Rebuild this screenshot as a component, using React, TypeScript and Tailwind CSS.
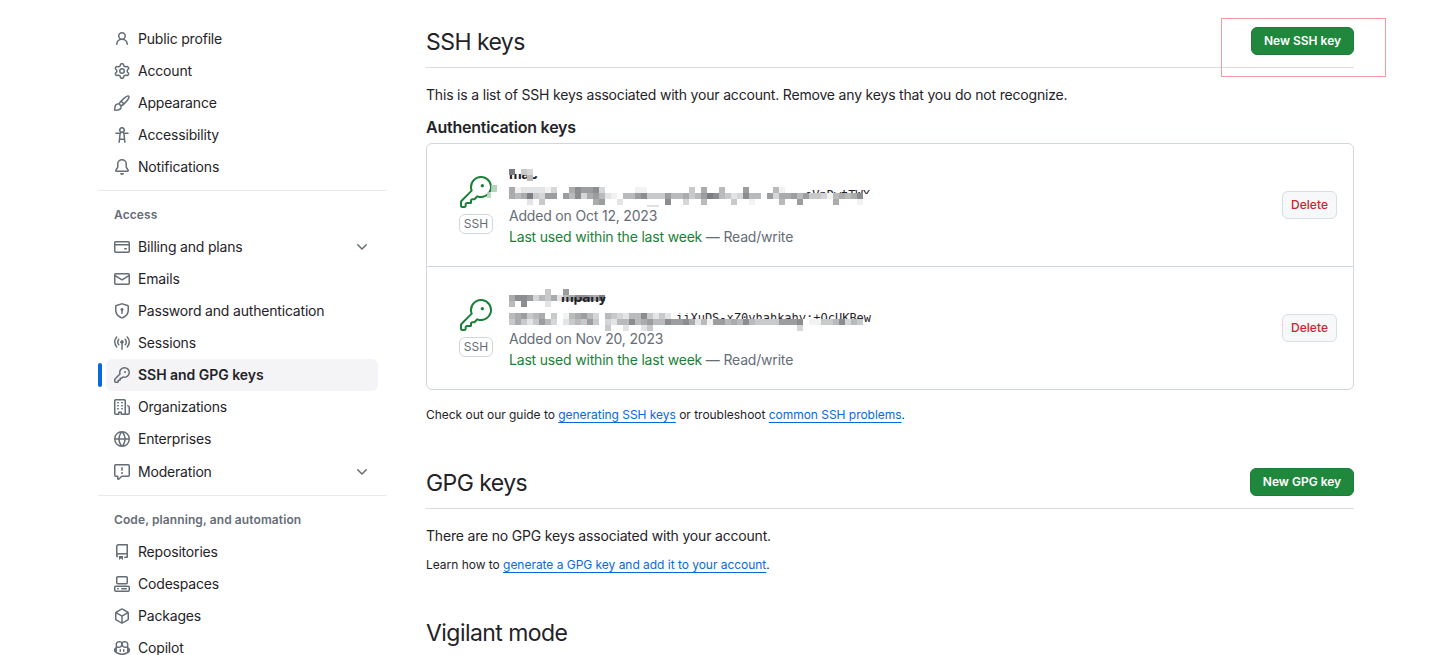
import type { ReactNode } from "react";
import { GoKey } from "react-icons/go";

const icons: Record<string, string> = {
  person:
    "M10.561 8.073a6.005 6.005 0 0 1 3.432 5.142.75.75 0 1 1-1.498.07 4.5 4.5 0 0 0-8.99 0 .75.75 0 0 1-1.498-.07 6.004 6.004 0 0 1 3.431-5.142 3.999 3.999 0 1 1 5.123 0ZM10.5 5a2.5 2.5 0 1 0-5 0 2.5 2.5 0 0 0 5 0Z",
  gear:
    "M8 0a8.2 8.2 0 0 1 .701.031C9.444.095 9.99.645 10.16 1.29l.288 1.107c.018.066.079.158.212.224.231.114.454.243.668.386.123.082.233.09.299.071l1.103-.303c.644-.176 1.392.021 1.82.63.27.385.506.792.704 1.218.315.675.111 1.422-.364 1.891l-.814.806c-.049.048-.098.147-.088.294.016.257.016.515 0 .772-.01.147.038.246.088.294l.814.806c.475.469.679 1.216.364 1.891a7.977 7.977 0 0 1-.704 1.217c-.428.61-1.176.807-1.82.63l-1.102-.302c-.067-.019-.177-.011-.3.071a5.909 5.909 0 0 1-.668.386c-.133.066-.194.158-.211.224l-.29 1.106c-.168.646-.715 1.196-1.458 1.26a8.006 8.006 0 0 1-1.402 0c-.743-.064-1.289-.614-1.458-1.26l-.289-1.106c-.018-.066-.079-.158-.212-.224a5.738 5.738 0 0 1-.668-.386c-.123-.082-.233-.09-.299-.071l-1.103.303c-.644.176-1.392-.021-1.82-.63a8.12 8.12 0 0 1-.704-1.218c-.315-.675-.111-1.422.363-1.891l.815-.806c.05-.048.098-.147.088-.294a6.214 6.214 0 0 1 0-.772c.01-.147-.038-.246-.088-.294l-.815-.806C.635 6.045.431 5.298.746 4.623a7.92 7.92 0 0 1 .704-1.217c.428-.61 1.176-.807 1.82-.63l1.102.302c.067.019.177.011.3-.071.214-.143.437-.272.668-.386.133-.066.194-.158.211-.224l.29-1.106C6.009.645 6.556.095 7.299.03 7.53.01 7.764 0 8 0Zm-.571 1.525c-.036.003-.108.036-.137.146l-.289 1.105c-.147.561-.549.967-.998 1.189-.173.086-.34.183-.5.29-.417.278-.97.423-1.529.27l-1.103-.303c-.109-.03-.175.016-.195.045-.22.312-.412.644-.573.99-.014.031-.021.11.059.19l.815.806c.411.406.562.957.53 1.456a4.709 4.709 0 0 0 0 .582c.032.499-.119 1.05-.53 1.456l-.815.806c-.081.08-.073.159-.059.19.162.346.353.677.573.989.02.03.085.076.195.046l1.102-.303c.56-.153 1.113-.008 1.53.27.161.107.328.204.501.29.447.222.85.629.997 1.189l.289 1.105c.029.109.101.143.137.146a6.6 6.6 0 0 0 1.142 0c.036-.003.108-.036.137-.146l.289-1.105c.147-.561.549-.967.998-1.189.173-.086.34-.183.5-.29.417-.278.97-.423 1.529-.27l1.103.303c.109.029.175-.016.195-.045.22-.313.411-.644.573-.99.014-.031.021-.11-.059-.19l-.815-.806c-.411-.406-.562-.957-.53-1.456a4.709 4.709 0 0 0 0-.582c-.032-.499.119-1.05.53-1.456l.815-.806c.081-.08.073-.159.059-.19a6.464 6.464 0 0 0-.573-.989c-.02-.03-.085-.076-.195-.046l-1.102.303c-.56.153-1.113.008-1.53-.27a4.44 4.44 0 0 0-.501-.29c-.447-.222-.85-.629-.997-1.189l-.289-1.105c-.029-.11-.101-.143-.137-.146a6.6 6.6 0 0 0-1.142 0ZM11 8a3 3 0 1 1-6 0 3 3 0 0 1 6 0ZM9.5 8a1.5 1.5 0 1 0-3.001.001A1.5 1.5 0 0 0 9.5 8Z",
  paintbrush:
    "M11.134 1.535c.7-.509 1.416-.942 2.076-1.155.649-.21 1.463-.267 2.069.34.603.601.568 1.411.368 2.07-.202.668-.624 1.39-1.125 2.096-1.011 1.424-2.496 2.987-3.775 4.249-1.098 1.084-2.132 1.839-3.04 2.3a3.744 3.744 0 0 1-1.055 3.217c-.431.431-1.065.691-1.657.861-.614.177-1.294.287-1.914.357A21.151 21.151 0 0 1 .797 16H.743l.007-.75H.749L.742 16a.75.75 0 0 1-.743-.742l.743-.008-.742.007v-.054a21.25 21.25 0 0 1 .13-2.284c.067-.647.187-1.287.358-1.914.17-.591.43-1.226.86-1.657a3.746 3.746 0 0 1 3.227-1.054c.466-.893 1.225-1.907 2.314-2.982 1.271-1.255 2.833-2.75 4.245-3.777ZM1.62 13.089c-.051.464-.086.929-.104 1.395.466-.018.932-.053 1.396-.104a10.511 10.511 0 0 0 1.668-.309c.526-.151.856-.325 1.011-.48a2.25 2.25 0 1 0-3.182-3.182c-.155.155-.329.485-.48 1.01a10.515 10.515 0 0 0-.309 1.67Zm10.396-10.34c-1.224.89-2.605 2.189-3.822 3.384l1.718 1.718c1.21-1.205 2.51-2.597 3.387-3.833.47-.662.78-1.227.912-1.662.134-.444.032-.551.009-.575h-.001V1.78c-.014-.014-.113-.113-.548.027-.432.14-.995.462-1.655.942Zm-4.832 7.266-.001.001a9.859 9.859 0 0 0 1.63-1.142L7.155 7.216a9.7 9.7 0 0 0-1.161 1.607c.482.302.889.71 1.19 1.192Z",
  accessibility:
    "M9.923 5.302c.063.063.122.129.178.198H14A.75.75 0 0 1 14 7h-3.3l.578 5.163.362 2.997a.75.75 0 0 1-1.49.18L9.868 13H6.132l-.282 2.34a.75.75 0 0 1-1.49-.18l.362-2.997L5.3 7H2a.75.75 0 0 1 0-1.5h3.9a2.54 2.54 0 0 1 .176-.198 3 3 0 1 1 3.847 0ZM9.2 7.073h-.001a1.206 1.206 0 0 0-2.398 0L6.305 11.5h3.39ZM9.5 3a1.5 1.5 0 1 0-3.001.001A1.5 1.5 0 0 0 9.5 3Z",
  bell:
    "M8 16a2 2 0 0 0 1.985-1.75c.017-.137-.097-.25-.235-.25h-3.5c-.138 0-.252.113-.235.25A2 2 0 0 0 8 16ZM3 5a5 5 0 0 1 10 0v2.947c0 .05.015.098.042.139l1.703 2.555A1.519 1.519 0 0 1 13.482 13H2.518a1.516 1.516 0 0 1-1.263-2.36l1.703-2.554A.255.255 0 0 0 3 7.947Zm5-3.5A3.5 3.5 0 0 0 4.5 5v2.947c0 .346-.102.683-.294.97l-1.703 2.556a.017.017 0 0 0-.003.01l.001.006c0 .002.002.004.004.006l.006.004.007.001h10.964l.007-.001.006-.004.004-.006.001-.007a.017.017 0 0 0-.003-.01l-1.703-2.554a1.745 1.745 0 0 1-.294-.97V5A3.5 3.5 0 0 0 8 1.5Z",
  creditCard:
    "M10.75 9a.75.75 0 0 0 0 1.5h1.5a.75.75 0 0 0 0-1.5h-1.5ZM0 3.75C0 2.784.784 2 1.75 2h12.5c.966 0 1.75.784 1.75 1.75v8.5A1.75 1.75 0 0 1 14.25 14H1.75A1.75 1.75 0 0 1 0 12.25ZM14.5 6.5h-13v5.75c0 .138.112.25.25.25h12.5a.25.25 0 0 0 .25-.25Zm0-2.75a.25.25 0 0 0-.25-.25H1.75a.25.25 0 0 0-.25.25V5h13Z",
  mail:
    "M1.75 2h12.5c.966 0 1.75.784 1.75 1.75v8.5A1.75 1.75 0 0 1 14.25 14H1.75A1.75 1.75 0 0 1 0 12.25v-8.5C0 2.784.784 2 1.75 2ZM1.5 12.251c0 .138.112.25.25.25h12.5a.25.25 0 0 0 .25-.25V5.809L8.38 9.397a.75.75 0 0 1-.76 0L1.5 5.809v6.442Zm13-8.181v-.32a.25.25 0 0 0-.25-.25H1.75a.25.25 0 0 0-.25.25v.32L8 7.88Z",
  shieldLock:
    "m8.533.133 5.25 1.68A1.75 1.75 0 0 1 15 3.48V7c0 1.566-.32 3.182-1.303 4.682-.983 1.498-2.585 2.813-5.032 3.855a1.697 1.697 0 0 1-1.33 0c-2.447-1.042-4.049-2.357-5.032-3.855C1.32 10.182 1 8.566 1 7V3.48a1.755 1.755 0 0 1 1.217-1.667l5.25-1.68a1.748 1.748 0 0 1 1.066 0Zm-.61 1.429.001.001-5.25 1.68a.251.251 0 0 0-.174.237V7c0 1.36.275 2.666 1.057 3.859.784 1.194 2.121 2.342 4.366 3.298a.196.196 0 0 0 .154 0c2.245-.957 3.582-2.103 4.366-3.297C13.225 9.666 13.5 8.358 13.5 7V3.48a.25.25 0 0 0-.174-.238l-5.25-1.68a.25.25 0 0 0-.153 0ZM9.5 6.5c0 .536-.286 1.032-.75 1.3v2.45a.75.75 0 0 1-1.5 0V7.8A1.5 1.5 0 1 1 9.5 6.5Z",
  broadcast:
    "M8.75 8.582v5.668a.75.75 0 0 1-1.5 0V8.582a1.75 1.75 0 1 1 1.5 0Zm3.983-7.125a.75.75 0 0 1 1.06.026A7.976 7.976 0 0 1 16 7c0 2.139-.84 4.083-2.207 5.517a.75.75 0 1 1-1.086-1.034A6.474 6.474 0 0 0 14.5 7a6.474 6.474 0 0 0-1.793-4.483.75.75 0 0 1 .026-1.06Zm-9.466 0c.3.286.312.76.026 1.06A6.474 6.474 0 0 0 1.5 7a6.47 6.47 0 0 0 1.793 4.483.75.75 0 0 1-1.086 1.034A7.973 7.973 0 0 1 0 7c0-2.139.84-4.083 2.207-5.517a.75.75 0 0 1 1.06-.026Zm8.556 2.321A4.988 4.988 0 0 1 13 7a4.988 4.988 0 0 1-1.177 3.222.75.75 0 1 1-1.146-.967A3.487 3.487 0 0 0 11.5 7c0-.86-.309-1.645-.823-2.255a.75.75 0 0 1 1.146-.967Zm-6.492.958A3.48 3.48 0 0 0 4.5 7a3.48 3.48 0 0 0 .823 2.255.75.75 0 0 1-1.146.967A4.981 4.981 0 0 1 3 7a4.982 4.982 0 0 1 1.188-3.236.75.75 0 1 1 1.143.972Z",
  key:
    "M10.5 0a5.499 5.499 0 1 1-1.288 10.848l-.932.932a.749.749 0 0 1-.53.22H7v.75a.749.749 0 0 1-.22.53l-.5.5a.749.749 0 0 1-.53.22H5v.75a.749.749 0 0 1-.22.53l-.5.5a.749.749 0 0 1-.53.22h-2A1.75 1.75 0 0 1 0 14.25v-2c0-.199.079-.389.22-.53l4.932-4.932A5.5 5.5 0 0 1 10.5 0Zm-4 5.5c-.001.431.069.86.205 1.269a.75.75 0 0 1-.181.768L1.5 12.56v1.69c0 .138.112.25.25.25h1.69l.06-.06v-1.19a.75.75 0 0 1 .75-.75h1.19l.06-.06v-1.19a.75.75 0 0 1 .75-.75h1.19l1.023-1.025a.75.75 0 0 1 .768-.18A4 4 0 1 0 6.5 5.5ZM11 6a1 1 0 1 1 0-2 1 1 0 0 1 0 2Z",
  organization:
    "M1.75 16A1.75 1.75 0 0 1 0 14.25V1.75C0 .784.784 0 1.75 0h8.5C11.216 0 12 .784 12 1.75v12.5c0 .085-.006.168-.018.25h2.268a.25.25 0 0 0 .25-.25V8.285a.25.25 0 0 0-.111-.208l-1.055-.703a.749.749 0 1 1 .832-1.248l1.055.703c.487.325.779.871.779 1.456v5.965A1.75 1.75 0 0 1 14.25 16h-3.5a.766.766 0 0 1-.197-.026c-.099.017-.2.026-.303.026h-3a.75.75 0 0 1-.75-.75V14h-1v1.25a.75.75 0 0 1-.75.75Zm-.25-1.75c0 .138.112.25.25.25H4v-1.25a.75.75 0 0 1 .75-.75h2.5a.75.75 0 0 1 .75.75v1.25h2.25a.25.25 0 0 0 .25-.25V1.75a.25.25 0 0 0-.25-.25h-8.5a.25.25 0 0 0-.25.25ZM3.75 6h.5a.75.75 0 0 1 0 1.5h-.5a.75.75 0 0 1 0-1.5ZM3 3.75A.75.75 0 0 1 3.75 3h.5a.75.75 0 0 1 0 1.5h-.5A.75.75 0 0 1 3 3.75Zm4 3A.75.75 0 0 1 7.75 6h.5a.75.75 0 0 1 0 1.5h-.5A.75.75 0 0 1 7 6.75ZM7.75 3h.5a.75.75 0 0 1 0 1.5h-.5a.75.75 0 0 1 0-1.5ZM3 9.75A.75.75 0 0 1 3.75 9h.5a.75.75 0 0 1 0 1.5h-.5A.75.75 0 0 1 3 9.75ZM7.75 9h.5a.75.75 0 0 1 0 1.5h-.5a.75.75 0 0 1 0-1.5Z",
  globe:
    "M8 0a8 8 0 1 1 0 16A8 8 0 0 1 8 0ZM5.78 8.75a9.64 9.64 0 0 0 1.363 4.177c.255.426.542.832.857 1.215.245-.296.551-.705.857-1.215A9.64 9.64 0 0 0 10.22 8.75Zm4.44-1.5a9.64 9.64 0 0 0-1.363-4.177c-.307-.51-.612-.919-.857-1.215a9.927 9.927 0 0 0-.857 1.215A9.64 9.64 0 0 0 5.78 7.25Zm-5.944 1.5H1.543a6.507 6.507 0 0 0 4.666 5.5c-.123-.181-.24-.365-.352-.552-.715-1.192-1.437-2.874-1.581-4.948Zm-2.733-1.5h2.733c.144-2.074.866-3.756 1.58-4.948.12-.197.237-.381.353-.552a6.507 6.507 0 0 0-4.666 5.5Zm10.181 1.5c-.144 2.074-.866 3.756-1.58 4.948-.12.197-.237.381-.353.552a6.507 6.507 0 0 0 4.666-5.5Zm2.733-1.5a6.507 6.507 0 0 0-4.666-5.5c.123.181.24.365.353.552.714 1.192 1.436 2.874 1.58 4.948Z",
  report:
    "M0 1.75C0 .784.784 0 1.75 0h12.5C15.216 0 16 .784 16 1.75v9.5A1.75 1.75 0 0 1 14.25 13H8.06l-2.573 2.573A1.458 1.458 0 0 1 3 14.543V13H1.75A1.75 1.75 0 0 1 0 11.25Zm1.75-.25a.25.25 0 0 0-.25.25v9.5c0 .138.112.25.25.25h2a.75.75 0 0 1 .75.75v2.19l2.72-2.72a.749.749 0 0 1 .53-.22h6.5a.25.25 0 0 0 .25-.25v-9.5a.25.25 0 0 0-.25-.25Zm7 2.25v2.5a.75.75 0 0 1-1.5 0v-2.5a.75.75 0 0 1 1.5 0ZM9 9a1 1 0 1 1-2 0 1 1 0 0 1 2 0Z",
  repo:
    "M2 2.5A2.5 2.5 0 0 1 4.5 0h8.75a.75.75 0 0 1 .75.75v12.5a.75.75 0 0 1-.75.75h-2.5a.75.75 0 0 1 0-1.5h1.75v-2h-8a1 1 0 0 0-.714 1.7.75.75 0 1 1-1.072 1.05A2.495 2.495 0 0 1 2 11.5Zm10.5-1h-8a1 1 0 0 0-1 1v6.708A2.486 2.486 0 0 1 4.5 9h8ZM5 12.25a.25.25 0 0 1 .25-.25h3.5a.25.25 0 0 1 .25.25v3.25a.25.25 0 0 1-.4.2l-1.45-1.087a.249.249 0 0 0-.3 0L5.4 15.7a.25.25 0 0 1-.4-.2Z",
  codespaces:
    "M0 11.25c0-.966.784-1.75 1.75-1.75h12.5c.966 0 1.75.784 1.75 1.75v3A1.75 1.75 0 0 1 14.25 16H1.75A1.75 1.75 0 0 1 0 14.25Zm2-9.5C2 .784 2.784 0 3.75 0h8.5C13.216 0 14 .784 14 1.75v5a1.75 1.75 0 0 1-1.75 1.75h-8.5A1.75 1.75 0 0 1 2 6.75Zm1.75-.25a.25.25 0 0 0-.25.25v5c0 .138.112.25.25.25h8.5a.25.25 0 0 0 .25-.25v-5a.25.25 0 0 0-.25-.25Zm-2 9.5a.25.25 0 0 0-.25.25v3c0 .138.112.25.25.25h12.5a.25.25 0 0 0 .25-.25v-3a.25.25 0 0 0-.25-.25ZM7 12.75a.75.75 0 0 1 .75-.75h4.5a.75.75 0 0 1 0 1.5h-4.5a.75.75 0 0 1-.75-.75Zm-4 0a.75.75 0 0 1 .75-.75h.5a.75.75 0 0 1 0 1.5h-.5a.75.75 0 0 1-.75-.75Z",
  package:
    "m8.878.392 5.25 3.045c.54.314.872.89.872 1.514v6.098a1.75 1.75 0 0 1-.872 1.514l-5.25 3.045a1.75 1.75 0 0 1-1.756 0l-5.25-3.045A1.75 1.75 0 0 1 1 11.049V4.951c0-.624.332-1.201.872-1.514L7.122.392a1.75 1.75 0 0 1 1.756 0ZM7.875 1.69l-4.63 2.685L8 7.133l4.755-2.758-4.63-2.685a.248.248 0 0 0-.25 0ZM2.5 5.677v5.372c0 .09.047.171.125.216l4.625 2.683V8.432Zm6.25 8.271 4.625-2.683a.25.25 0 0 0 .125-.216V5.677L8.75 8.432Z",
  copilot:
    "M7.998 15.035c-4.562 0-7.873-2.914-7.998-3.749V9.338c.085-.628.677-1.686 1.588-2.065.013-.07.024-.143.036-.218.029-.183.06-.384.126-.612-.201-.508-.254-1.084-.254-1.656 0-.87.128-1.769.693-2.484.579-.733 1.494-1.124 2.724-1.261 1.206-.134 2.262.034 2.944.765.05.053.096.108.139.165.044-.057.094-.112.143-.165.682-.731 1.738-.899 2.944-.765 1.23.137 2.145.528 2.724 1.261.566.715.693 1.614.693 2.484 0 .572-.053 1.148-.254 1.656.066.228.098.429.126.612.012.076.024.148.037.218.924.385 1.522 1.471 1.591 2.095v1.872c0 .766-3.351 3.795-8.002 3.795Zm0-1.485c2.28 0 4.584-1.11 5.002-1.433V7.862l-.023-.116c-.49.21-1.075.291-1.727.291-1.146 0-2.059-.327-2.71-.991A3.222 3.222 0 0 1 8 6.303a3.24 3.24 0 0 1-.544.743c-.65.664-1.563.991-2.71.991-.652 0-1.236-.081-1.727-.291l-.023.116v4.255c.419.323 2.722 1.433 5.002 1.433ZM6.762 2.83c-.193-.206-.637-.413-1.682-.297-1.019.113-1.479.404-1.713.7-.247.312-.369.789-.369 1.554 0 .793.129 1.171.308 1.371.162.181.519.379 1.442.379.853 0 1.339-.235 1.638-.54.315-.322.527-.827.617-1.553.117-.935-.037-1.395-.241-1.614Zm4.155-.297c-1.044-.116-1.488.091-1.681.297-.204.219-.359.679-.242 1.614.091.726.303 1.231.618 1.553.299.305.784.54 1.638.54.922 0 1.28-.198 1.442-.379.179-.2.308-.578.308-1.371 0-.765-.123-1.242-.37-1.554-.233-.296-.693-.587-1.713-.7ZM6.25 9.037a.75.75 0 0 1 .75.75v1.501a.75.75 0 0 1-1.5 0V9.787a.75.75 0 0 1 .75-.75Zm4.25.75v1.501a.75.75 0 0 1-1.5 0V9.787a.75.75 0 0 1 1.5 0Z",
  chevron:
    "M12.78 5.22a.749.749 0 0 1 0 1.06l-4.25 4.25a.749.749 0 0 1-1.06 0L3.22 6.28a.749.749 0 1 1 1.06-1.06L8 8.939l3.72-3.719a.749.749 0 0 1 1.06 0Z",
};

function Icon({ name }: { name: string }) {
  return (
    <svg viewBox="0 0 16 16" className="size-4 shrink-0 fill-[#656d76]">
      <path d={icons[name]} />
    </svg>
  );
}

type NavEntry = { icon: string; label: string; expandable?: boolean; active?: boolean };

const profileNav: NavEntry[] = [
  { icon: "person", label: "Public profile" },
  { icon: "gear", label: "Account" },
  { icon: "paintbrush", label: "Appearance" },
  { icon: "accessibility", label: "Accessibility" },
  { icon: "bell", label: "Notifications" },
];

const accessNav: NavEntry[] = [
  { icon: "creditCard", label: "Billing and plans", expandable: true },
  { icon: "mail", label: "Emails" },
  { icon: "shieldLock", label: "Password and authentication" },
  { icon: "broadcast", label: "Sessions" },
  { icon: "key", label: "SSH and GPG keys", active: true },
  { icon: "organization", label: "Organizations" },
  { icon: "globe", label: "Enterprises" },
];

const moderationNav: NavEntry[] = [{ icon: "report", label: "Moderation", expandable: true }];

const codeNav: NavEntry[] = [
  { icon: "repo", label: "Repositories" },
  { icon: "codespaces", label: "Codespaces" },
  { icon: "package", label: "Packages" },
  { icon: "copilot", label: "Copilot" },
];

function NavList({ items }: { items: NavEntry[] }) {
  return (
    <ul>
      {items.map((item) => (
        <li key={item.label} className="flex h-8 items-center">
          <span className={item.active ? "h-6 w-1 rounded-md bg-[#0969da]" : "h-6 w-1"} />
          <a
            className={
              item.active
                ? "ml-1 mr-2 flex h-8 flex-1 items-center gap-2 rounded-md bg-[#f4f4f6] px-2 font-semibold tracking-[-0.03px]"
                : "ml-1 mr-2 flex h-8 flex-1 items-center gap-2 rounded-md px-2"
            }
          >
            <Icon name={item.icon} />
            <span className="flex-1">{item.label}</span>
            {item.expandable && <Icon name="chevron" />}
          </a>
        </li>
      ))}
    </ul>
  );
}

function NavHeading({ children }: { children: ReactNode }) {
  return (
    <h3 className="px-4 text-xs leading-[18px] font-semibold tracking-[0.1px] text-[#656d76]">{children}</h3>
  );
}

const shades = [
  "#ffffff", "#f2f2f2", "#e3e4e5", "#d5d6d7", "#c8c9ca",
  "#b9babb", "#aaabac", "#9c9d9f", "#8c8d90", "#7c7d83",
];

/** Pixelated cover: each digit is the darkness of one 6px cell. */
function Mosaic({ rows }: { rows: string[] }) {
  const width = Math.max(...rows.map((r) => r.length)) * 6;
  return (
    <svg width={width} height={rows.length * 6} shapeRendering="crispEdges" className="block">
      {rows.flatMap((row, y) =>
        [...row].map((c, x) =>
          c === "." ? null : (
            <rect key={`${x}-${y}`} x={x * 6} y={y * 6} width={6} height={6} fill={shades[Number(c)]} />
          ),
        ),
      )}
    </svg>
  );
}

function KeyRow({ date, cover, keyCover }: { date: string; cover: ReactNode; keyCover?: ReactNode }) {
  return (
    <li className="box-content flex h-[122px] items-center border-b border-[#d0d7de] last:border-b-0">
      <div className="relative ml-8 flex w-[34px] flex-col items-center">
        <GoKey className="size-8 text-[#1a7f37]" />
        <span className="mt-1.5 flex h-5 w-[34px] items-center justify-center rounded-md border border-[#d0d7de] text-xs tracking-normal text-[#656d76]">
          SSH
        </span>
        {keyCover}
      </div>
      <div className="relative ml-4 flex-1 pt-[42px] leading-[21px] text-[#656d76]">
        {cover}
        <p>Added on {date}</p>
        <p>
          <span className="text-[#1a7f37]">Last used within the last week</span> — Read/write
        </p>
      </div>
      <button className="mr-4 h-7 w-[55px] rounded-md border border-[#d9dee3] bg-[#f6f8fa] text-xs font-medium tracking-[0.05px] text-[#cf222e]">
        Delete
      </button>
    </li>
  );
}

function SectionHead({ title, button }: { title: string; button?: ReactNode }) {
  return (
    <div className="flex h-[51px] items-start justify-between border-b border-[#d8dee4]">
      <h2 className="mt-[7px] text-[23px] leading-9 tracking-[-0.55px]">{title}</h2>
      {button}
    </div>
  );
}

function Link({ children }: { children: ReactNode }) {
  return <a className="text-[#0969da] underline decoration-1 underline-offset-[3px]">{children}</a>;
}

const primaryButton =
  "mt-[10px] h-7 rounded-md border border-[#1f7c38] bg-[#1f883d] text-xs font-semibold tracking-normal whitespace-nowrap text-white";

export default function App() {
  return (
    <div className="relative flex h-[655px] w-[1456px] overflow-hidden bg-white pl-[98px] font-['Inter',sans-serif] text-sm tracking-[-0.185px] text-[#1f2328]">
      <nav className="w-72 shrink-0 pt-[23px]">
        <NavList items={profileNav} />
        <hr className="mt-[7px] mb-[15px] border-[#e7e9ec]" />
        <NavHeading>Access</NavHeading>
        <div className="mt-[7px] flex flex-col gap-px">
          <NavList items={accessNav} />
          <NavList items={moderationNav} />
        </div>
        <hr className="mt-[7px] mb-[15px] border-[#e7e9ec]" />
        <NavHeading>Code, planning, and automation</NavHeading>
        <div className="mt-[7px]">
          <NavList items={codeNav} />
        </div>
      </nav>

      <main className="ml-10 w-[928px] pt-[17px]">
        <SectionHead
          title="SSH keys"
          button={<button className={`${primaryButton} w-[103px]`}>New SSH key</button>}
        />
        <p className="mt-4 leading-[21px]">
          This is a list of SSH keys associated with your account. Remove any keys that you do not recognize.
        </p>
        <h3 className="mt-[10px] text-base leading-6 font-semibold tracking-[-0.23px]">Authentication keys</h3>
        <ul className="mt-1 rounded-md border border-[#d0d7de]">
          <KeyRow
            date="Oct 12, 2023"
            keyCover={
              <div className="absolute left-[31px] top-[9px] opacity-90">
                <svg width="7" height="13" shapeRendering="crispEdges" className="overflow-visible">
                  <rect x="1" y="0" width="6" height="7" fill="#acd1b6" />
                  <rect x="-3" y="7" width="4" height="6" fill="#b9d8c1" />
                </svg>
              </div>
            }
            cover={
              <>
                <div className="absolute left-0 top-[11px] h-[6px] overflow-hidden">
                  <p className="-mt-[11px] font-bold text-[#1f2328]">mac</p>
                </div>
                <div className="absolute left-0 top-[6px]">
                  <Mosaic rows={["9.43", "...5"]} />
                </div>
                <div className="absolute left-[296px] top-[26px] h-[5px] overflow-hidden font-['DejaVu_Sans_Mono',monospace] text-xs tracking-normal text-[#1f2328]">
                  <p className="-mt-[3px] leading-[18px]">oVnDwtTWX</p>
                </div>
                <div className="absolute left-0 top-[24px]">
                  <Mosaic
                    rows={[
                      "61222213..687783.....11.......4.6..5...7....51",
                      "65694377.758367521.55784447556457985423855.7366757443156" + "3568".slice(1),
                      "...2.4........67..2.......8..3..5....4..1....5..7.....6...1",
                    ]}
                  />
                </div>
                <span className="absolute left-[138px] top-[42px] h-0.5 w-3 bg-[#dfe0e0]" />
              </>
            }
          />
          <KeyRow
            date="Nov 20, 2023"
            cover={
              <>
                <div className="absolute left-0 top-[3px]">
                  <Mosaic rows={["......4..7", "6887354625688769", "5.8...2"]} />
                </div>
                <div className="absolute left-[52px] top-[11px] h-[9px] overflow-hidden">
                  <p className="-mt-[11px] font-bold text-[#1f2328]">mpany</p>
                </div>
                <div className="absolute right-0 left-0 top-[27px] h-[10px] overflow-hidden font-['DejaVu_Sans_Mono',monospace] text-xs tracking-normal text-[#1f2328]">
                  <p className="-mt-[4px] ml-[167px] leading-[18px]">iiXuDS-xZ0yhahkahy:+QcUKBew</p>
                </div>
                <div className="absolute left-0 top-[27px]">
                  <Mosaic
                    rows={[
                      "567456.4.156753.54325584242",
                      "46424753.245474.3255856755877862517756585444477780114458354",
                      "................4..2..24........................3",
                    ]}
                  />
                </div>
              </>
            }
          />
        </ul>
        <p className="mt-4 text-xs leading-[18px] tracking-[-0.03px]">
          Check out our guide to <Link>generating SSH keys</Link> or troubleshoot{" "}
          <Link>common SSH problems</Link>.
        </p>

        <div className="mt-[34px]">
          <SectionHead
            title="GPG keys"
            button={<button className={`${primaryButton} w-[104px]`}>New GPG key</button>}
          />
        </div>
        <p className="mt-4 leading-[21px]">There are no GPG keys associated with your account.</p>
        <p className="mt-[10px] text-xs leading-[18px] tracking-[-0.03px]">
          Learn how to <Link>generate a GPG key and add it to your account</Link>.
        </p>

        <h2 className="mt-[41px] text-[23px] leading-9 tracking-[-0.55px]">Vigilant mode</h2>
      </main>

      <div className="absolute left-[1221px] top-[18px] h-[59px] w-[165px] border border-[#f59ba0]" />
    </div>
  );
}
